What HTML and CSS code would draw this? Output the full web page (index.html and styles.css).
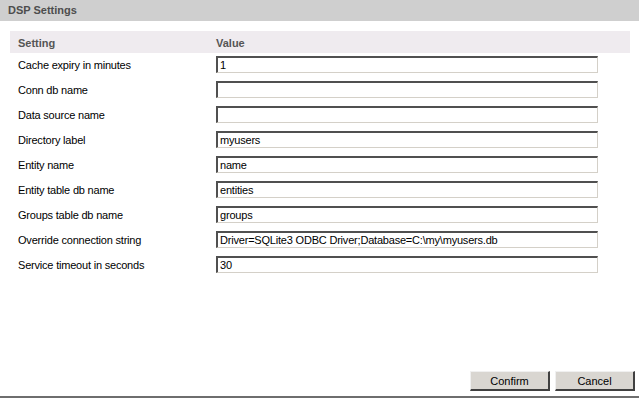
FILE: index.html
```html
<!DOCTYPE html>
<html lang="en">

<head>
    <meta charset="utf-8">
    <title>DSP Settings</title>
    <link rel="stylesheet" href="styles.css">
</head>

<body>

    <div class="dialog">
        <header class="titlebar">DSP Settings</header>

        <main class="content">
            <div class="settings">
                <div class="row head">
                    <div class="cell">Setting</div>
                    <div class="cell">Value</div>
                </div>
                <div class="row">
                    <div class="cell label">Cache expiry in minutes</div>
                    <div class="cell"><input class="field" type="text" value="1"></div>
                </div>
                <div class="row">
                    <div class="cell label">Conn db name</div>
                    <div class="cell"><input class="field" type="text" value=""></div>
                </div>
                <div class="row">
                    <div class="cell label">Data source name</div>
                    <div class="cell"><input class="field" type="text" value=""></div>
                </div>
                <div class="row">
                    <div class="cell label">Directory label</div>
                    <div class="cell"><input class="field" type="text" value="myusers"></div>
                </div>
                <div class="row">
                    <div class="cell label">Entity name</div>
                    <div class="cell"><input class="field" type="text" value="name"></div>
                </div>
                <div class="row">
                    <div class="cell label">Entity table db name</div>
                    <div class="cell"><input class="field" type="text" value="entities"></div>
                </div>
                <div class="row">
                    <div class="cell label">Groups table db name</div>
                    <div class="cell"><input class="field" type="text" value="groups"></div>
                </div>
                <div class="row">
                    <div class="cell label">Override connection string</div>
                    <div class="cell"><input class="field" type="text" value="Driver=SQLite3 ODBC Driver;Database=C:\my\myusers.db"></div>
                </div>
                <div class="row">
                    <div class="cell label">Service timeout in seconds</div>
                    <div class="cell"><input class="field" type="text" value="30"></div>
                </div>
            </div>
        </main>

        <footer class="buttons">
            <button class="btn confirm">Confirm</button>
            <button class="btn">Cancel</button>
        </footer>
    </div>

    <div class="bottomline"></div>

</body>

</html>
```

FILE: styles.css
```css
* {
    box-sizing: border-box;
}

html,
body {
    margin: 0;
    height: 100%;
}

body {
    display: flex;
    flex-direction: column;
    background-color: #ffffff;
    font-family: 'Liberation Sans', Arial, sans-serif;
    font-size: 11px;
    color: #000000;
}

.dialog {
    flex: 1;
    display: flex;
    flex-direction: column;
}

.titlebar {
    height: 21px;
    line-height: 20px;
    padding-left: 8px;
    background-color: #cfcfcf;
    color: #4d4d4d;
    font-weight: bold;
}

.content {
    flex: 1;
    padding: 10px 9px 0 10px;
}

.row {
    display: grid;
    grid-template-columns: 198px 390px;
    height: 25px;
    padding-bottom: 2px;
    align-items: center;
}

.row.head {
    height: 22px;
    padding-bottom: 0;
    background-color: #efebef;
    color: #555555;
    font-weight: bold;
}

.cell {
    padding-left: 8px;
}

.label {
    letter-spacing: -0.2px;
}

.row.head .cell {
    padding-top: 1px;
}

.field {
    display: block;
    width: 382px;
    height: 17px;
    margin: 0;
    padding: 0 0 0 2px;
    font-family: 'Liberation Sans', Arial, sans-serif;
    font-size: 11px;
    letter-spacing: -0.2px;
    color: #000000;
    background-color: #ffffff;
    border-top: 2px solid #505050;
    border-left: 2px solid #505050;
    border-right: 1px solid #d4d0c8;
    border-bottom: 1px solid #d4d0c8;
    outline: none;
}

.buttons {
    display: flex;
    justify-content: flex-end;
    gap: 5px;
    padding: 0 4px 5px 0;
}

.btn {
    width: 80px;
    height: 20px;
    margin: 0;
    padding: 0;
    font-family: 'Liberation Sans', Arial, sans-serif;
    font-size: 11px;
    color: #000000;
    background-color: #d9d6d1;
    border-top: 1px solid #f0f0f0;
    border-left: 1px solid #f0f0f0;
    border-right: 2px solid #404040;
    border-bottom: 2px solid #404040;
}

.bottomline {
    height: 2px;
    background-color: #6e6e6e;
}
```
